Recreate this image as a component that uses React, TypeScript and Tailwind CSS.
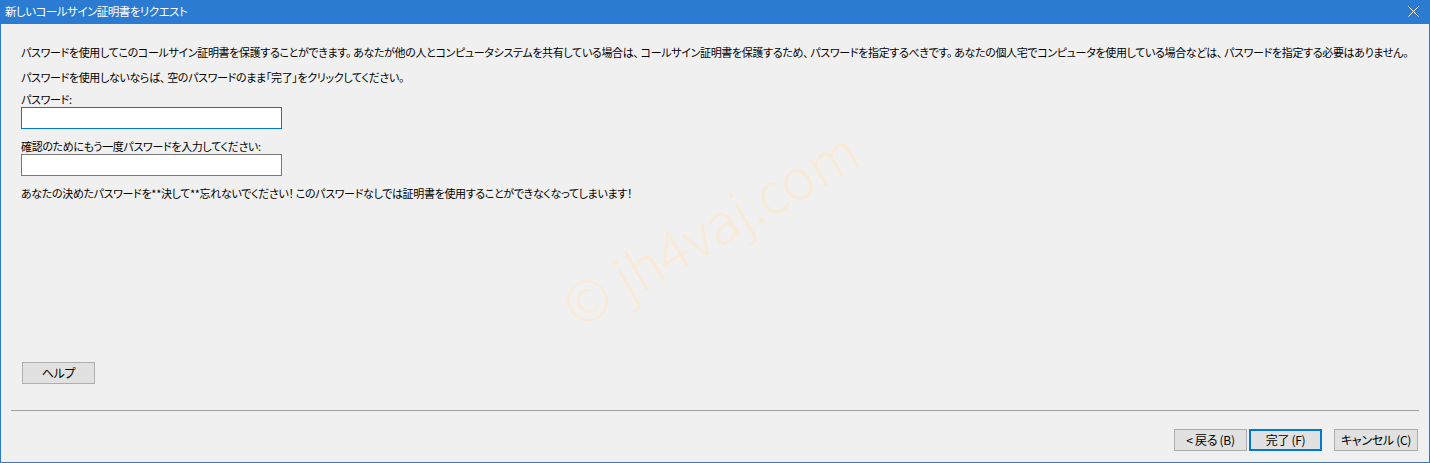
import React from "react";

const font = { fontFamily: '"Noto Sans CJK JP", "Noto Sans", sans-serif' };

function Button({ label, width, primary }: { label: string; width: string; primary?: boolean }) {
  return (
    <button
      className={
        (primary
          ? "border-2 border-[#0078d7] "
          : "border border-[#adadad] ") +
        width +
        " h-[22px] bg-[#e1e1e1] text-[12px] leading-none tracking-[-0.3px] text-black"
      }
    >
      {label}
    </button>
  );
}

export default function App() {
  return (
    <div
      className="relative flex h-[463px] w-[1430px] flex-col overflow-hidden border-x border-b border-[#2b7bd3] bg-[#f0f0f0] text-[11px] tracking-[-0.34px] text-black [font-feature-settings:'palt']"
      style={font}
    >
      <div className="flex h-[24px] shrink-0 items-center justify-between bg-[#2b7bd3] pl-[4px] pr-[10px] text-[11.5px] tracking-[-0.5px] text-white">
        <span>新しいコールサイン証明書をリクエスト</span>
        <svg width="11" height="11" viewBox="0 0 11 11" className="mb-[1px]">
          <path d="M0.5 0.5 L10.5 10.5 M10.5 0.5 L0.5 10.5" stroke="white" strokeWidth="1" />
        </svg>
      </div>

      <div className="flex flex-1 flex-col px-[20px] pt-[20px]">
        <p className="leading-[16px] whitespace-nowrap">
          パスワードを使用してこのコールサイン証明書を保護することができます。 あなたが他の人とコンピュータシステムを共有している場合は、 コールサイン証明書を保護するため、 パスワードを指定するべきです。 あなたの個人宅でコンピュータを使用している場合などは、 パスワードを指定する必要はありません。
        </p>
        <p className="mt-[9px] leading-[16px]">
          パスワードを使用しないならば、 空のパスワードのまま「完了」をクリックしてください。
        </p>
        <label className="mt-[6px] leading-[16px]">パスワード:</label>
        <input className="h-[22px] w-[261px] border border-[#0078d7] bg-white outline-none" />
        <label className="mt-[9px] leading-[16px]">確認のためにもう一度パスワードを入力してください:</label>
        <input className="h-[22px] w-[261px] border border-[#7a7a7a] bg-white outline-none" />
        <p className="mt-[9px] leading-[16px]">
          あなたの決めたパスワードを**決して**忘れないでください！ このパスワードなしでは証明書を使用することができなくなってしまいます！
        </p>

        <div className="mt-auto mb-[26px] pl-[1px]">
          <Button label="ヘルプ" width="w-[73px]" />
        </div>
      </div>

      <div className="mx-[10px] h-[1px] shrink-0 bg-[#a0a0a0]" />

      <div className="flex h-[51px] shrink-0 items-start justify-end pt-[18px] pr-[11px]">
        <div className="flex gap-[2px]">
          <Button label="< 戻る (B)" width="w-[73px]" />
          <Button label="完了 (F)" width="w-[73px]" primary />
        </div>
        <div className="ml-[12px]">
          <Button label="キャンセル (C)" width="w-[84px]" />
        </div>
      </div>

      <div className="pointer-events-none absolute left-[708px] top-[226px] -translate-x-1/2 -translate-y-1/2 -rotate-[30deg] whitespace-nowrap text-[56px] font-light tracking-normal text-[#f9ead8]">
        © jh4vaj.com
      </div>
    </div>
  );
}
